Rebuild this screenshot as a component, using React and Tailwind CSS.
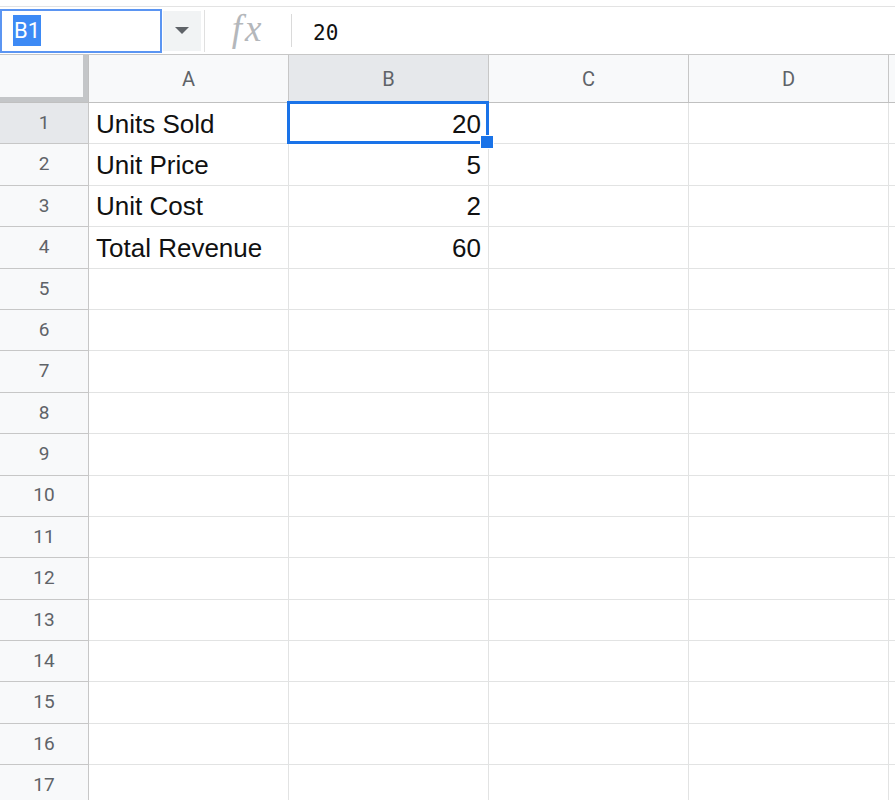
import React from "react";

const rows = [
  ["Units Sold", "20"],
  ["Unit Price", "5"],
  ["Unit Cost", "2"],
  ["Total Revenue", "60"],
];

export default function App() {
  const all = Array.from({ length: 17 }, (_, i) => i + 1);
  return (
    <div className="w-[895px] h-[800px] overflow-hidden bg-white">
      {/* top strip */}
      <div className="h-[7px] border-b border-[#e3e3e3] bg-white" />
      {/* formula bar */}
      <div className="h-[48px] border-b border-[#c7c7c7] flex items-center bg-white">
        <div className="h-[44px] w-[162px] border-2 border-[#5b95f2] flex items-center pl-[11px] shrink-0">
          <span className="bg-[#3d8af5] text-white text-[22px] leading-[31px] px-[1px] font-['Roboto',sans-serif]">B1</span>
        </div>
        <div className="h-[40px] w-[38px] bg-[#f1f3f4] flex items-center justify-center shrink-0 ml-[1px]">
          <svg width="14" height="7" viewBox="0 0 14 7"><path d="M0 0 L14 0 L7 7 Z" fill="#5f6368" /></svg>
        </div>
        <div className="w-px h-[42px] bg-[#e0e0e0] ml-[3px] shrink-0" />
        <div className="w-[86px] flex items-center justify-center shrink-0">
          <span className="italic text-[#b4b7bb] text-[37px] leading-none tracking-[3px] font-['Liberation_Serif',serif] -mt-[4px]">fx</span>
        </div>
        <div className="w-px h-[33px] bg-[#dadada] shrink-0" />
        <span className="ml-[21px] mt-[6px] text-[21px] text-[#111] font-['DejaVu_Sans_Mono',monospace]">20</span>
      </div>
      {/* column headers */}
      <div className="h-[48px] flex border-b border-[#c0c0c0] bg-[#f8f9fa]">
        <div className="w-[89px] shrink-0 relative border-r border-[#c0c0c0]">
          <div className="absolute right-0 top-0 bottom-0 w-[5px] bg-[#c4c6c8]" />
          <div className="absolute left-0 right-0 bottom-0 h-[5px] bg-[#c4c6c8]" />
        </div>
        {["A", "B", "C", "D"].map((c) => (
          <div
            key={c}
            className={`w-[200px] shrink-0 border-r border-[#c7c7c7] flex items-center justify-center text-[20px] text-[#5f6368] font-['Roboto',sans-serif] ${c === "B" ? "bg-[#e6e8eb]" : ""}`}
          >
            {c}
          </div>
        ))}
        <div className="flex-1" />
      </div>
      {/* rows */}
      {all.map((n) => {
        const d = rows[n - 1];
        return (
          <div key={n} className="h-[41.4px] flex">
            <div
              className={`w-[89px] shrink-0 border-r border-b border-[#c7c7c7] flex items-center justify-center text-[19px] text-[#5f6368] font-['Roboto',sans-serif] ${n === 1 ? "bg-[#e6e8eb]" : "bg-[#f8f9fa]"}`}
            >
              {n}
            </div>
            <div className="w-[200px] shrink-0 border-r border-b border-[#e2e3e3] flex items-center pl-[7px] pt-[2px] text-[26px] text-[#111] font-['Liberation_Sans',Arial,sans-serif]">
              {d ? d[0] : ""}
            </div>
            <div className="w-[200px] shrink-0 border-r border-b border-[#e2e3e3] flex items-center justify-end pr-[7px] pt-[2px] text-[26px] text-[#111] font-['Liberation_Sans',Arial,sans-serif] relative">
              {d ? d[1] : ""}
              {n === 1 && (
                <div className="absolute -left-[2px] -top-[2px] -right-px -bottom-px border-[3px] border-[#1a73e8] z-10">
                  <div className="absolute -right-[8px] -bottom-[8px] w-[14px] h-[14px] bg-[#1a73e8] border border-white" />
                </div>
              )}
            </div>
            <div className="w-[200px] shrink-0 border-r border-b border-[#e2e3e3]" />
            <div className="w-[200px] shrink-0 border-r border-b border-[#e2e3e3]" />
            <div className="flex-1 border-b border-[#e2e3e3]" />
          </div>
        );
      })}
    </div>
  );
}
